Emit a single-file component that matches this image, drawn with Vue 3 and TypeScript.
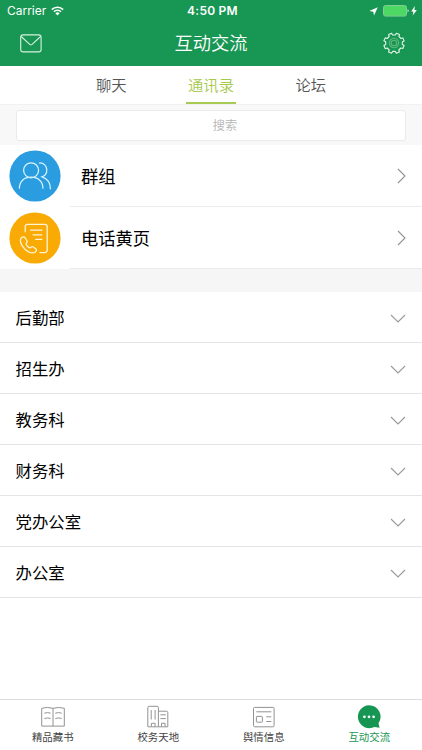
<script setup lang="ts">
import { ref } from 'vue'

const tabs: string[] = ['聊天', '通讯录', '论坛']
const activeTab = ref(1)
const departments: string[] = ['后勤部', '招生办', '教务科', '财务科', '党办公室', '办公室']
const keyword = ref('')
</script>

<template>
  <div class="screen">
    <header class="top">
      <div class="status">
        <div class="status-left">
          <span class="carrier">Carrier</span>
          <svg class="wifi" width="13" height="10" viewBox="0 0 13 10">
            <path d="M.8 3.6a8.1 8.1 0 0 1 11.4 0" fill="none" stroke="#fff" stroke-width="1.6" />
            <path d="M2.9 5.8a5.1 5.1 0 0 1 7.2 0" fill="none" stroke="#fff" stroke-width="1.5" />
            <path d="M6.5 9.4 4.4 7.3a3 3 0 0 1 4.2 0z" fill="#fff" />
          </svg>
        </div>
        <span class="time">4:50 PM</span>
        <div class="status-right">
          <svg width="9" height="9" viewBox="0 0 9 9"><path d="M8.8.2 5 8.6 4.3 4.7.3 4z" fill="#fff" /></svg>
          <svg class="battery" width="26" height="12" viewBox="0 0 26 12">
            <rect x=".5" y=".5" width="23" height="10.6" rx="2" fill="#4cd863" stroke="#82cc96" />
            <path d="M24.5 4.2q1.3.3 1.3 1.6t-1.3 1.7z" fill="#b5e5c1" />
          </svg>
          <svg class="bolt" width="6" height="10" viewBox="0 0 6 10"><path d="M3.8 0 .2 5.4h2.2L1.7 9.6 5.8 4H3.4z" fill="#fff" /></svg>
        </div>
      </div>
      <div class="navbar">
        <svg width="22" height="19" viewBox="0 0 22 19" fill="none" stroke="#d8f1df" stroke-width="1.1">
          <rect x=".7" y=".9" width="20.4" height="17" rx="2.4" />
          <path d="m1.2 2.5 8.5 7.8q1.2 1 2.4 0l8.5-7.8" />
        </svg>
        <h1>互动交流</h1>
        <svg class="gear" width="22" height="22" viewBox="0 0 22 22" fill="none" stroke="#e0f5e6" stroke-width="1.1" stroke-linejoin="round">
          <path d="M8.6 1.2 9.5 3h3l.9-1.8 3.1 1.3-.6 2 2.1 2 1.9-.6 1.2 3-1.8 1v2.6l1.8 1-1.3 3-2-.5-2 2 .6 2-3.1 1.2-1-1.8H9.6l-1 1.8-3-1.3.6-1.9-2-2-2 .6L.9 13.5l1.8-1V9.8l-1.8-1 1.3-2.9 2 .6 2-2-.6-2z" />
          <circle cx="11" cy="11" r="4.7" stroke="#5fb77d" />
          <circle cx="11" cy="11" r="2.8" stroke="#5fb77d" />
        </svg>
      </div>
    </header>

    <nav class="tabs">
      <button v-for="(tab, i) in tabs" :key="tab" :class="{ active: i === activeTab }" @click="activeTab = i">
        <span>{{ tab }}</span>
      </button>
    </nav>

    <div class="search"><input v-model="keyword" type="text" placeholder="搜索" /></div>

    <section class="entries">
      <div class="entry">
        <svg class="badge" width="52" height="52" viewBox="0 0 52 52" fill="none" stroke="#d9f2ff" stroke-width="1.25" stroke-linecap="round">
          <circle cx="26" cy="26" r="25.6" fill="#299de0" stroke="none" />
          <circle cx="22.1" cy="20.3" r="7.5" />
          <path d="M10.4 38.2c0-6.6 4.5-11 11.7-11s11.8 4.4 11.8 11M30.3 13c4.5-.4 7.5 3 7.5 6.8 0 3.4-2 6.2-4.7 7 5 1.7 8.3 6 8.3 12" />
        </svg>
        <div class="entry-main">
          <span>群组</span>
          <svg width="9" height="16" viewBox="0 0 9 16"><path d="m1 1 7 7-7 7" fill="none" stroke="#929292" stroke-width="1.1" /></svg>
        </div>
      </div>
      <div class="entry">
        <svg class="badge" width="52" height="52" viewBox="0 0 52 52" fill="none" stroke="#fff4d3" stroke-width="1.3" stroke-linecap="round" stroke-linejoin="round">
          <circle cx="26" cy="26" r="25.6" fill="#f9aa05" stroke="none" />
          <path d="M16.2 19.8v-5q0-2.5 2.5-2.5h17q2.5 0 2.5 2.5v23.3q0 2.5-2.5 2.5h-4.8" />
          <path d="M21.7 18.2h11.2M24 22.8h8.9M26.6 27.3h6.3" />
          <path d="M13.3 25.1c-2.6 1.1-2.4 4.8-.4 8.3 3.5 6 9.8 9.2 13.4 6.5 1.4-1 1.6-2.2.5-3.2l-2.9-1.9c-1.2-.7-1.8.5-2.8 1-1.2.3-4.5-3.1-4-4.3.4-.8 1.6-1 1-2.3l-1.8-3.2c-.6-1-1.7-1.4-3-.9z" />
        </svg>
        <div class="entry-main">
          <span>电话黄页</span>
          <svg width="9" height="16" viewBox="0 0 9 16"><path d="m1 1 7 7-7 7" fill="none" stroke="#929292" stroke-width="1.1" /></svg>
        </div>
      </div>
    </section>

    <ul class="departments">
      <li v-for="name in departments" :key="name">
        <span>{{ name }}</span>
        <svg width="16" height="9" viewBox="0 0 16 9"><path d="m1 1 7 7 7-7" fill="none" stroke="#999" stroke-width="1.1" /></svg>
      </li>
    </ul>

    <footer class="tabbar">
      <div class="item">
        <svg width="24" height="24" viewBox="0 0 24 24" fill="none" stroke="#929292">
          <path d="M.7 3.3q5.6-1.7 11.3 0 5.6-1.7 11.3 0v17.8H.7zM12 3.3v17.8M3.3 8.2q3.3-1.2 6.3 0M3.3 13.5q3.3-1.2 6.3 0M14.3 8.2q3.3-1.2 6.4 0M14.3 13.5q3.3-1.2 6.4 0" />
        </svg>
        <span>精品藏书</span>
      </div>
      <div class="item">
        <svg width="24" height="24" viewBox="0 0 24 24" fill="none" stroke="#929292">
          <path d="M1.8 21.8V2.6q0-1.3 1.3-1.3h8q1.3 0 1.3 1.3v19.2H1.8M12.4 6.2h8q1.4 0 1.4 1.3v14.3h-9.4M5.2 5v9.5M9.1 5v9.5M14.4 9.8h5.4M14.4 13.6h5.4M5.4 21.5v-3.2h3.7v3.2M15.5 21.5v-3.2h3.6v3.2" />
        </svg>
        <span>校务天地</span>
      </div>
      <div class="item">
        <svg width="24" height="24" viewBox="0 0 24 24" fill="none" stroke="#929292">
          <rect x="1.5" y="2.4" width="20.6" height="19.4" rx="1.2" />
          <path d="M4.3 6.8h15M14.3 11.8h5M14.3 16.5h5" />
          <rect x="4.4" y="11.4" width="6" height="5.8" rx=".7" />
        </svg>
        <span>舆情信息</span>
      </div>
      <div class="item current">
        <svg width="24" height="24" viewBox="0 0 24 24">
          <path d="M12 .2a11.5 11.5 0 0 1 9.5 18l1.1 4.6-5.1-.8A11.5 11.5 0 1 1 12 .2z" fill="#179653" />
          <circle cx="7.4" cy="11.8" r="1.35" fill="#fff" /><circle cx="12" cy="11.8" r="1.35" fill="#fff" /><circle cx="16.6" cy="11.8" r="1.35" fill="#fff" />
        </svg>
        <span>互动交流</span>
      </div>
    </footer>
  </div>
</template>

<style>
body { margin: 0; background: #fff; }
</style>

<style scoped>
.screen {
  box-sizing: border-box;
  width: 422px;
  height: 750px;
  display: flex;
  flex-direction: column;
  overflow: hidden;
  background: #fff;
  color: #000;
  font-family: "Noto Sans CJK SC", sans-serif;
}
.screen svg { display: block; flex: none; }
.top { height: 65.5px; flex: none; background: #189653; color: #fff; }
.status {
  display: grid;
  grid-template-columns: 1fr auto 1fr;
  align-items: center;
  height: 22px;
  padding: 0 5px 0 7px;
  font-family: Inter, sans-serif;
  font-size: 12px;
  line-height: 22px;
}
.status-left, .status-right { display: flex; align-items: center; }
.status-left { gap: 5px; }
.carrier { letter-spacing: -.02px; }
.time { font-weight: 600; letter-spacing: .25px; padding-left: 1px; }
.status-right { justify-content: flex-end; gap: 5px; }
.battery { margin-right: -3px; }
.navbar {
  display: flex;
  align-items: center;
  justify-content: space-between;
  height: 43px;
  padding: 0 17px 0 20px;
}
.gear { margin-top: -2px; }
h1 { margin: 0; padding-right: 3px; font-size: 18.3px; font-weight: 350; line-height: 38px; height: 42px; }
.tabs {
  display: grid;
  grid-template-columns: repeat(3, 99.7px);
  justify-content: center;
  height: 38.5px;
  flex: none;
}
.tabs button {
  display: flex;
  justify-content: center;
  padding: 0;
  border: 0;
  background: none;
  color: #555;
  font: 350 15.3px/36px "Noto Sans CJK SC", sans-serif;
}
.tabs span { box-sizing: border-box; height: 38.5px; padding: 0 2.5px; }
.tabs .active { color: #a6c94f; }
.tabs .active span { border-bottom: 2px solid #a6ca54; }
.search {
  box-sizing: border-box;
  height: 41px;
  flex: none;
  padding: 5px 16px;
  background: #f8f8f8;
  border-top: 1px solid #f1f1f1;
}
.search input {
  box-sizing: border-box;
  display: block;
  width: 390px;
  height: 31px;
  padding: 0 0 2px 28px;
  border: 1px solid #eaeaea;
  border-radius: 3px;
  outline: none;
  background: #fff;
  text-align: center;
  font: 350 12.2px "Noto Sans CJK SC", sans-serif;
}
.search input::placeholder { color: #b5b5b5; opacity: 1; }
.entry { display: flex; align-items: center; height: 62px; padding-left: 9px; }
.entry-main {
  box-sizing: border-box;
  display: flex;
  flex: 1;
  align-items: center;
  justify-content: space-between;
  height: 62px;
  margin-left: 9px;
  padding: 0 16px 0 11px;
  border-bottom: 1px solid #ebebeb;
  font-size: 17.3px;
}
.departments {
  margin: 0;
  padding: 0;
  list-style: none;
  border-top: 23px solid #f6f6f6;
}
.departments li {
  box-sizing: border-box;
  display: flex;
  align-items: center;
  justify-content: space-between;
  height: 51px;
  padding: 0 16px 0 15.5px;
  border-bottom: 1px solid #e4e4e4;
  font-size: 16.4px;
}
.departments svg { margin-top: 2px; }
.tabbar {
  box-sizing: border-box;
  display: grid;
  grid-template-columns: repeat(4, 1fr);
  height: 51px;
  margin-top: auto;
  padding-top: 5px;
  border-top: 1px solid #dcdcdc;
  flex: none;
}
.item {
  display: flex;
  flex-direction: column;
  align-items: center;
  color: #444;
  font-size: 10.4px;
  line-height: 16px;
}
.current { color: #179653; }
</style>
